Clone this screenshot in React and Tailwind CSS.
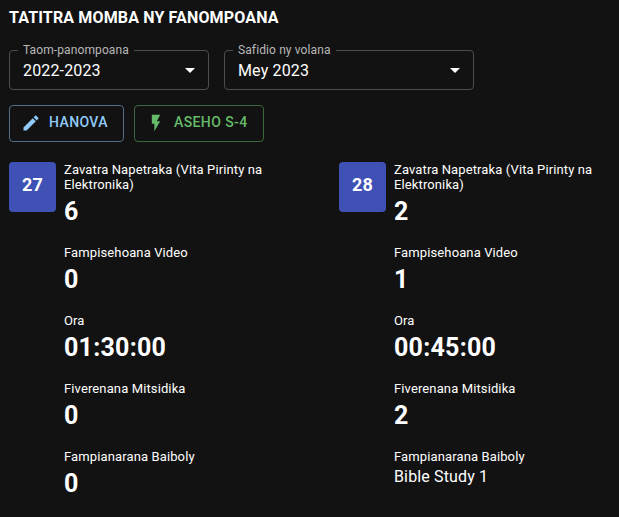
import React from "react";

function Select({ label, value, className }) {
  return (
    <div className={"relative flex h-[40px] items-center justify-between rounded-[4px] border border-[#4d4d4d] pl-[13px] pr-[6px] " + className}>
      <span className="absolute -top-[9px] left-[8px] bg-[#121212] px-[5px] text-[12px] leading-[16px] tracking-[0.11px] text-[#b8b8b8]">{label}</span>
      <span className="text-[16px] leading-[23px] tracking-[0.15px]">{value}</span>
      <svg viewBox="0 0 24 24" className="h-6 w-6 fill-white"><path d="M7 10l5 5 5-5z" /></svg>
    </div>
  );
}

function Button({ d, label, className }) {
  return (
    <button className={"flex h-[37px] items-center gap-2 rounded-[4px] border pb-px pl-[11px] text-[14px] font-medium leading-[24px] tracking-[0.4px] " + className}>
      <svg viewBox="0 0 24 24" className="h-5 w-5 fill-current"><path d={d} /></svg>
      <span className="whitespace-nowrap pb-[2px]">{label}</span>
    </button>
  );
}

const LABELS = ["Zavatra Napetraka (Vita Pirinty na Elektronika)", "Fampisehoana Video", "Ora", "Fiverenana Mitsidika", "Fampianarana Baiboly"];

function Day({ day, values, study }) {
  return (
    <section className="flex w-[330px] shrink-0 gap-2">
      <div className="flex h-[50px] w-[47px] shrink-0 items-center justify-center rounded-[4px] bg-[#3f51b5] pb-[5px] text-[18px] font-bold tracking-[0.15px]">{day}</div>
      <div className="flex w-[220px] flex-col gap-5">
        {LABELS.map((label, i) => (
          <div key={label}>
            <div className="text-[13px] font-normal leading-[15px] tracking-[0.12px]">{label}</div>
            {study && i === 4 ? (
              <div className="pt-px text-[16px] leading-[24px] tracking-[0.15px]">{study}</div>
            ) : (
              <div className="pt-[6px] text-[25px] font-bold leading-[27px] tracking-[0.25px]">{values[i]}</div>
            )}
          </div>
        ))}
      </div>
    </section>
  );
}

export default function App() {
  return (
    <main className="h-[517px] w-[619px] overflow-hidden bg-[#121212] pl-[9px] pt-[6px] font-[Roboto,sans-serif] text-white">
      <h1 className="text-[16px] font-bold leading-[24px] tracking-[0.15px]">TATITRA MOMBA NY FANOMPOANA</h1>
      <div className="mt-5 flex gap-[15px]">
        <Select label="Taom-panompoana" value="2022-2023" className="w-[200px]" />
        <Select label="Safidio ny volana" value="Mey 2023" className="w-[250px]" />
      </div>
      <div className="mt-[15px] flex gap-[10px]">
        <Button label="HANOVA" className="w-[115px] border-[#516e86] text-[#90caf9]" d="M3 17.25V21h3.75L17.81 9.94l-3.75-3.75L3 17.25zM20.71 7.04c.39-.39.39-1.02 0-1.41l-2.34-2.34a.9959.9959 0 0 0-1.41 0l-1.83 1.83 3.75 3.75 1.83-1.83z" />
        <Button label="ASEHO S-4" className="w-[130px] border-[#3c673e] text-[#66bb6a]" d="M7 2v11h3v9l7-12h-4l4-8z" />
      </div>
      <div className="mt-5 flex">
        <Day day="27" values={["6", "0", "01:30:00", "0", "0"]} />
        <Day day="28" values={["2", "1", "00:45:00", "2", ""]} study="Bible Study 1" />
      </div>
    </main>
  );
}
